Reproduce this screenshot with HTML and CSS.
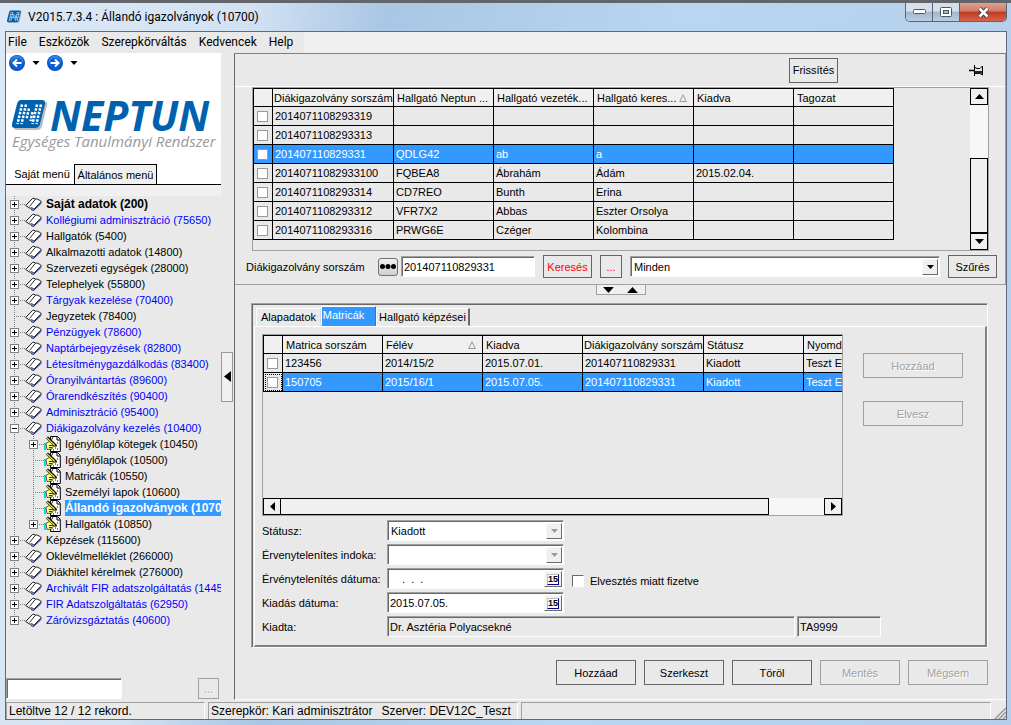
FILE: index.html
```html
<!DOCTYPE html>
<html lang="hu">
<head>
  <meta charset="UTF-8" />
  <title>V2015.7.3.4 : Állandó igazolványok (10700)</title>
  <link rel="stylesheet" href="styles.css">
</head>
<body>
  <!-- shared icons -->
  <svg class="defs" width="0" height="0" aria-hidden="true">
    <symbol id="book" viewBox="0 0 17 14">
      <path d="M6 12.500L8.500 13.500 16.500 6" fill="none" stroke="#0000c0"/>
      <path d="M.7 8.500L7.500 1.500Q9 .6 10.500 2.200 12 1.200 16.300 4.500L9 12.300Q7 9.800 5 11.300Z" fill="#fff" stroke="#000" stroke-width=".9"/>
      <path d="M10.500 2.200L4.500 9.500" fill="none" stroke="#000" stroke-width=".8"/>
    </symbol>
    <symbol id="sheet" viewBox="0 0 17 16">
      <path d="M6.500.5H13.500L16.300 3.300V15.500H6.500Z" fill="#fff" stroke="#000"/>
      <path d="M13 1v3H16M13 7h1M11 12h1M13 13h1M9 14h1M12 10h1" fill="none" stroke="#000"/>
      <path d="M0 7h2v7H0z" fill="#00e0e0"/>
      <path d="M2 7.500L5 5.500 8 6 10 9 8 13 3 13.500Z" fill="#ffff70" stroke="#000" stroke-width=".6"/>
      <path d="M3 1.500L12 10" stroke="#000" stroke-width="3"/>
      <path d="M3 2L11 9.500" stroke="#f0e040" stroke-width="1.200"/>
      <path d="M9 1L7 5M5 9.500h4M5 11.500h3" stroke="#000" stroke-width=".8"/>
    </symbol>
    <symbol id="logo" viewBox="0 0 36 31">
      <path d="M9 2H33Q36 2 35 5L30 26Q29 30 25 30H5Q1 30 2 26Z" fill="#b8bcc0"/>
      <path d="M9 0H30Q34 0 33 4L28 24Q27 28 23 28H3Q-1 28 0 24L5 4Q6 0 9 0Z" fill="#0062ae"/>
      <g stroke="#fff" stroke-width="2.500" stroke-dasharray="2.500 1.300">
        <path d="M10 4.500L5.500 24M14 4.500L9.500 24M25 4.500L20.500 24M29 4.500L24.500 24"/>
        <path d="M17 8.500L14.500 19M20.500 12L18.500 21"/>
      </g>
    </symbol>
    <symbol id="up" viewBox="0 0 9 5"><path d="M4.500 0L9 5H0Z"/></symbol>
    <symbol id="down" viewBox="0 0 9 5"><path d="M0 0H9L4.500 5Z"/></symbol>
    <symbol id="left" viewBox="0 0 5 9"><path d="M5 0V9L0 4.500Z"/></symbol>
    <symbol id="right" viewBox="0 0 5 9"><path d="M0 0L5 4.500 0 9Z"/></symbol>
    <symbol id="sort" viewBox="0 0 8 8"><path d="M4 .8L7.300 7.500H.7Z" fill="none" stroke="#999"/></symbol>
  </svg>

  <div class="window">
    <header class="titlebar">
      <svg class="app-icon" width="15" height="14"><use href="#logo"/></svg>
      <h1>V2015.7.3.4 : Állandó igazolványok (10700)</h1>
      <div class="win-buttons">
        <button class="win-btn" aria-label="Kis méret"><svg width="13" height="6"><rect x=".5" y=".5" width="12" height="4" rx="1" fill="#fff" stroke="#4a5568"/></svg></button>
        <button class="win-btn" aria-label="Teljes méret"><svg width="12" height="11"><rect x=".5" y=".5" width="11" height="9" rx="1" fill="#fff" stroke="#4a5568"/><rect x="3.500" y="3.500" width="5" height="3" fill="#a8b8cc" stroke="#4a5568"/></svg></button>
        <button class="win-btn close" aria-label="Bezárás"><svg width="13" height="11" viewBox="0 0 13 11"><path d="M2.500 1.500L10.500 9.500M10.500 1.500L2.500 9.500" stroke="#4a3a48" stroke-width="4.500"/><path d="M2.500 1.500L10.500 9.500M10.500 1.500L2.500 9.500" stroke="#fff" stroke-width="2.500"/></svg></button>
      </div>
    </header>

    <div class="client">
      <nav class="menubar">
        <a href="#">File</a>
        <a href="#">Eszközök</a>
        <a href="#">Szerepkörváltás</a>
        <a href="#">Kedvencek</a>
        <a href="#">Help</a>
      </nav>

      <div class="workspace">
        <aside class="sidebar">
          <div class="brand">
            <div class="history">
              <button class="round" aria-label="Vissza"><svg width="16" height="16"><circle cx="8" cy="8" r="8" fill="#0a4fc0"/><circle cx="8" cy="7" r="6.500" fill="#2f86ee"/><circle cx="8" cy="9" r="6" fill="#0b5cd8"/><path d="M12.500 8H5M8 4.500L4.500 8 8 11.500" fill="none" stroke="#fff" stroke-width="2"/></svg></button>
              <svg class="drop" width="8" height="4" viewBox="0 0 9 5"><use href="#down"/></svg>
              <button class="round" aria-label="Előre"><svg width="16" height="16"><circle cx="8" cy="8" r="8" fill="#0a4fc0"/><circle cx="8" cy="7" r="6.500" fill="#2f86ee"/><circle cx="8" cy="9" r="6" fill="#0b5cd8"/><path d="M3.500 8H11M8 4.500L11.500 8 8 11.500" fill="none" stroke="#fff" stroke-width="2"/></svg></button>
              <svg class="drop" width="8" height="4" viewBox="0 0 9 5"><use href="#down"/></svg>
            </div>
            <div class="logo">
              <svg width="36" height="31"><use href="#logo"/></svg>
              <span class="logo-name">NEPTUN</span>
            </div>
            <p class="slogan">Egységes Tanulmányi Rendszer</p>
            <div class="menu-tabs">
              <button class="menu-tab">Saját menü</button>
              <button class="menu-tab active">Általános menü</button>
            </div>
          </div>

          <ul class="tree">
            <li><div class="node bold"><button class="toggle plus" aria-label="Kinyit"></button><svg class="book"><use href="#book"/></svg><a href="#">Saját adatok (200)</a></div></li>
            <li><div class="node"><button class="toggle plus" aria-label="Kinyit"></button><svg class="book"><use href="#book"/></svg><a class="blue" href="#">Kollégiumi adminisztráció (75650)</a></div></li>
            <li><div class="node"><button class="toggle plus" aria-label="Kinyit"></button><svg class="book"><use href="#book"/></svg><a href="#">Hallgatók (5400)</a></div></li>
            <li><div class="node"><button class="toggle plus" aria-label="Kinyit"></button><svg class="book"><use href="#book"/></svg><a href="#">Alkalmazotti adatok (14800)</a></div></li>
            <li><div class="node"><button class="toggle plus" aria-label="Kinyit"></button><svg class="book"><use href="#book"/></svg><a href="#">Szervezeti egységek (28000)</a></div></li>
            <li><div class="node"><button class="toggle plus" aria-label="Kinyit"></button><svg class="book"><use href="#book"/></svg><a href="#">Telephelyek (55800)</a></div></li>
            <li><div class="node"><button class="toggle plus" aria-label="Kinyit"></button><svg class="book"><use href="#book"/></svg><a class="blue" href="#">Tárgyak kezelése (70400)</a></div></li>
            <li><div class="node"><span class="no-toggle"></span><svg class="book"><use href="#book"/></svg><a href="#">Jegyzetek (78400)</a></div></li>
            <li><div class="node"><button class="toggle plus" aria-label="Kinyit"></button><svg class="book"><use href="#book"/></svg><a class="blue" href="#">Pénzügyek (78600)</a></div></li>
            <li><div class="node"><button class="toggle plus" aria-label="Kinyit"></button><svg class="book"><use href="#book"/></svg><a class="blue" href="#">Naptárbejegyzések (82800)</a></div></li>
            <li><div class="node"><button class="toggle plus" aria-label="Kinyit"></button><svg class="book"><use href="#book"/></svg><a class="blue" href="#">Létesítménygazdálkodás (83400)</a></div></li>
            <li><div class="node"><button class="toggle plus" aria-label="Kinyit"></button><svg class="book"><use href="#book"/></svg><a class="blue" href="#">Óranyilvántartás (89600)</a></div></li>
            <li><div class="node"><button class="toggle plus" aria-label="Kinyit"></button><svg class="book"><use href="#book"/></svg><a class="blue" href="#">Órarendkészítés (90400)</a></div></li>
            <li><div class="node"><button class="toggle plus" aria-label="Kinyit"></button><svg class="book"><use href="#book"/></svg><a class="blue" href="#">Adminisztráció (95400)</a></div></li>
            <li>
              <div class="node"><button class="toggle" aria-label="Becsuk"></button><svg class="book"><use href="#book"/></svg><a class="blue" href="#">Diákigazolvány kezelés (10400)</a></div>
              <ul>
                <li><div class="node"><button class="toggle plus" aria-label="Kinyit"></button><svg class="sheet"><use href="#sheet"/></svg><a href="#">Igénylőlap kötegek (10450)</a></div></li>
                <li><div class="node"><span class="no-toggle"></span><svg class="sheet"><use href="#sheet"/></svg><a href="#">Igénylőlapok (10500)</a></div></li>
                <li><div class="node"><span class="no-toggle"></span><svg class="sheet"><use href="#sheet"/></svg><a href="#">Matricák (10550)</a></div></li>
                <li><div class="node"><span class="no-toggle"></span><svg class="sheet"><use href="#sheet"/></svg><a href="#">Személyi lapok (10600)</a></div></li>
                <li><div class="node bold"><span class="no-toggle"></span><svg class="sheet"><use href="#sheet"/></svg><a class="selected" href="#">Állandó igazolványok (10700)</a></div></li>
                <li><div class="node"><button class="toggle plus" aria-label="Kinyit"></button><svg class="sheet"><use href="#sheet"/></svg><a href="#">Hallgatók (10850)</a></div></li>
              </ul>
            </li>
            <li><div class="node"><button class="toggle plus" aria-label="Kinyit"></button><svg class="book"><use href="#book"/></svg><a href="#">Képzések (115600)</a></div></li>
            <li><div class="node"><button class="toggle plus" aria-label="Kinyit"></button><svg class="book"><use href="#book"/></svg><a href="#">Oklevélmelléklet (266000)</a></div></li>
            <li><div class="node"><button class="toggle plus" aria-label="Kinyit"></button><svg class="book"><use href="#book"/></svg><a href="#">Diákhitel kérelmek (276000)</a></div></li>
            <li><div class="node"><button class="toggle plus" aria-label="Kinyit"></button><svg class="book"><use href="#book"/></svg><a class="blue" href="#">Archivált FIR adatszolgáltatás (144500)</a></div></li>
            <li><div class="node"><button class="toggle plus" aria-label="Kinyit"></button><svg class="book"><use href="#book"/></svg><a class="blue" href="#">FIR Adatszolgáltatás (62950)</a></div></li>
            <li><div class="node"><button class="toggle plus" aria-label="Kinyit"></button><svg class="book"><use href="#book"/></svg><a class="blue" href="#">Záróvizsgáztatás (40600)</a></div></li>
          </ul>

          <div class="tree-search">
            <input class="sunken" type="text" aria-label="Menüpont keresése">
            <button class="btn" disabled>...</button>
          </div>
        </aside>

        <div class="splitter">
          <button aria-label="Menü elrejtése"><svg width="7" height="11" viewBox="0 0 5 9" preserveAspectRatio="none"><use href="#left"/></svg></button>
        </div>

        <main class="content">
          <section class="top">
            <div class="toolbar">
              <button class="btn">Frissítés</button>
              <svg class="pin" width="15" height="12" viewBox="0 0 15 12"><path d="M0 6.500H5" stroke="#000" stroke-width="1.500"/><path d="M5.500 1V12M6 3.500L8 4.500H11L13.500 2V11L11 9.500H6" fill="none" stroke="#000"/><path d="M6 7h7v2.500H6z" fill="#222"/></svg>
            </div>

            <div class="grid-box">
              <div class="grid-area">
                <table class="grid cards">
                  <thead>
                    <tr><th class="check"></th><th class="wide">Diákigazolvány sorszám</th><th>Hallgató Neptun ...</th><th>Hallgató vezeték...</th><th><span class="sorted">Hallgató keres...<svg width="8" height="8"><use href="#sort"/></svg></span></th><th>Kiadva</th><th>Tagozat</th></tr>
                  </thead>
                  <tbody>
                    <tr><td><input type="checkbox" aria-label="2014071108293319"></td><td>2014071108293319</td><td></td><td></td><td></td><td></td><td></td></tr>
                    <tr><td><input type="checkbox" aria-label="2014071108293313"></td><td>2014071108293313</td><td></td><td></td><td></td><td></td><td></td></tr>
                    <tr class="current"><td><input type="checkbox" aria-label="201407110829331"></td><td>201407110829331</td><td>QDLG42</td><td>ab</td><td>a</td><td></td><td></td></tr>
                    <tr><td><input type="checkbox" aria-label="20140711082933100"></td><td>20140711082933100</td><td>FQBEA8</td><td>Ábrahám</td><td>Ádám</td><td>2015.02.04.</td><td></td></tr>
                    <tr><td><input type="checkbox" aria-label="2014071108293314"></td><td>2014071108293314</td><td>CD7REO</td><td>Bunth</td><td>Erina</td><td></td><td></td></tr>
                    <tr><td><input type="checkbox" aria-label="2014071108293312"></td><td>2014071108293312</td><td>VFR7X2</td><td>Abbas</td><td>Eszter Orsolya</td><td></td><td></td></tr>
                    <tr><td><input type="checkbox" aria-label="2014071108293316"></td><td>2014071108293316</td><td>PRWG6E</td><td>Czéger</td><td>Kolombina</td><td></td><td></td></tr>
                  </tbody>
                </table>
              </div>
              <div class="vscroll">
                <button aria-label="Fel"><svg width="9" height="5"><use href="#up"/></svg></button>
                <div class="track"><div class="thumb"></div></div>
                <button aria-label="Le"><svg width="9" height="5"><use href="#down"/></svg></button>
              </div>
            </div>

            <div class="filter">
              <label for="serial">Diákigazolvány sorszám</label>
              <button class="dots" aria-label="Mező választása"><svg width="16" height="5"><circle cx="2.500" cy="2.500" r="2.500"/><circle cx="8" cy="2.500" r="2.500"/><circle cx="13.500" cy="2.500" r="2.500"/></svg></button>
              <input class="sunken" id="serial" type="text" value="201407110829331">
              <button class="btn red">Keresés</button>
              <button class="btn red more">...</button>
              <div class="field combo">
                <select aria-label="Szűrő"><option>Minden</option></select>
                <span class="arrow"><svg width="7" height="4" viewBox="0 0 9 5"><use href="#down"/></svg></span>
              </div>
              <button class="btn">Szűrés</button>
            </div>
          </section>

          <div class="hsplit">
            <button aria-label="Panelek méretezése"><svg width="11" height="6" viewBox="0 0 9 5"><use href="#down"/></svg><svg width="11" height="6" viewBox="0 0 9 5"><use href="#up"/></svg></button>
          </div>

          <section class="detail">
            <div class="tabs">
              <button class="tab">Alapadatok</button>
              <button class="tab active">Matricák</button>
              <button class="tab">Hallgató képzései</button>
            </div>
            <div class="page">
              <div class="sticker-row">
                <div class="grid-box stickers">
                  <div class="grid-area">
                    <table class="grid">
                      <thead>
                        <tr><th class="check"></th><th>Matrica sorszám</th><th><span class="sorted">Félév<svg width="8" height="8"><use href="#sort"/></svg></span></th><th>Kiadva</th><th class="wide">Diákigazolvány sorszám</th><th>Státusz</th><th>Nyomdai sorszám</th></tr>
                      </thead>
                      <tbody>
                        <tr><td><input type="checkbox" aria-label="123456"></td><td>123456</td><td>2014/15/2</td><td>2015.07.01.</td><td>201407110829331</td><td>Kiadott</td><td>Teszt Elek</td></tr>
                        <tr class="current focus"><td><input type="checkbox" aria-label="150705"></td><td>150705</td><td>2015/16/1</td><td>2015.07.05.</td><td>201407110829331</td><td>Kiadott</td><td>Teszt Elek</td></tr>
                      </tbody>
                    </table>
                  </div>
                  <div class="hscroll">
                    <button aria-label="Balra"><svg width="5" height="9"><use href="#left"/></svg></button>
                    <div class="track"><div class="thumb"></div></div>
                    <button aria-label="Jobbra"><svg width="5" height="9"><use href="#right"/></svg></button>
                  </div>
                </div>
                <div class="side-actions">
                  <button class="btn" disabled>Hozzáad</button>
                  <button class="btn" disabled>Elvesz</button>
                </div>
              </div>

              <div class="form">
                <label for="status">Státusz:</label>
                <div class="field combo off">
                  <select id="status"><option>Kiadott</option></select>
                  <span class="arrow"><svg width="7" height="4" viewBox="0 0 9 5"><use href="#down"/></svg></span>
                </div>
                <label for="reason">Érvenytelenítes indoka:</label>
                <div class="field combo off">
                  <select id="reason"><option></option></select>
                  <span class="arrow"><svg width="7" height="4" viewBox="0 0 9 5"><use href="#down"/></svg></span>
                </div>
                <label for="voidDate">Érvénytelenítés dátuma:</label>
                <div class="line">
                  <div class="field date empty"><input id="voidDate" type="text" value=".  .  ."><button aria-label="Naptár"><span>15</span></button></div>
                  <label class="paid"><input type="checkbox">Elvesztés miatt fizetve</label>
                </div>
                <label for="issueDate">Kiadás dátuma:</label>
                <div class="field date"><input id="issueDate" type="text" value="2015.07.05."><button aria-label="Naptár"><span>15</span></button></div>
                <label for="issuer">Kiadta:</label>
                <div class="line issuer">
                  <input class="sunken" id="issuer" type="text" value="Dr. Asztéria Polyacsekné" readonly>
                  <input class="sunken code" type="text" value="TA9999" aria-label="Kiadó kódja" readonly>
                </div>
              </div>
            </div>
          </section>

          <div class="actions">
            <button class="btn">Hozzáad</button>
            <button class="btn">Szerkeszt</button>
            <button class="btn">Töröl</button>
            <button class="btn" disabled>Mentés</button>
            <button class="btn" disabled>Mégsem</button>
          </div>
        </main>
      </div>

      <footer class="statusbar">
        <div class="records">Letöltve 12 / 12 rekord.</div>
        <div class="role"><span>Szerepkör: Kari adminisztrátor</span><span>Szerver: DEV12C_Teszt</span></div>
        <div class="rest"></div>
        <svg width="12" height="12"><path d="M1 12L12 1M5 12L12 5M9 12L12 9" stroke="#999" stroke-width="1.500"/></svg>
      </footer>
    </div>
  </div>
</body>
</html>
```

FILE: styles.css
```css
* {
  box-sizing: border-box;
}
body {
  margin: 0;
  font: 11px/14px "Liberation Sans", Arial, sans-serif;
  color: #000;
}
button, input, select {
  font: inherit;
  color: inherit;
  margin: 0;
  padding: 0;
  border-radius: 0;
}
a {
  color: inherit;
  text-decoration: none;
}
svg {
  display: block;
  flex: none;
}
.defs {
  position: absolute;
}

/* window frame */
.window {
  height: 100vh;
  min-height: 725px;
  display: flex;
  flex-direction: column;
  padding: 0 4px 5px 5px;
  border-top: 3px solid #62666a;
  background: linear-gradient(100deg, #dbe8f6 0, #d3e2f3 22%, #a9c6e4 34%, #b9d5f0 60%, #b5cfea 100%);
}
.titlebar {
  height: 28px;
  display: flex;
  align-items: center;
  gap: 6px;
  padding-left: 2px;
}
.titlebar h1 {
  flex: 1;
  margin: 0;
  font: 12px/16px Roboto, sans-serif;
}
.win-buttons {
  display: flex;
  align-self: flex-start;
  border: 1px solid #5a6675;
  border-top: 0;
  border-radius: 0 0 5px 5px;
  overflow: hidden;
}
.win-btn {
  width: 27px;
  height: 18px;
  display: flex;
  align-items: center;
  justify-content: center;
  border: 0;
  border-right: 1px solid #5a6675;
  background: linear-gradient(#d5e0ec 45%, #a3b6cb 50%, #bccde0);
}
.win-btn.close {
  width: 46px;
  border-right: 0;
  background: linear-gradient(#e0a090 0, #d27a68 45%, #bd3a22 50%, #d4654c);
}
.client {
  flex: 1;
  display: flex;
  flex-direction: column;
  min-height: 0;
  border: 1px solid #5f6b7a;
  background: #e9e9e9;
}
.menubar {
  height: 21px;
  display: flex;
  gap: 12px;
  padding: 2px 2px 0;
  background: linear-gradient(to right, #e9e9e9 298px, #f0f0f0 298px);
  font: 12px/16px Roboto, sans-serif;
}
.workspace {
  flex: 1;
  min-height: 0;
  display: flex;
}

/* left side */
.sidebar {
  width: 215px;
  display: flex;
  flex-direction: column;
}
.brand {
  background: #fff;
}
.history {
  display: flex;
  align-items: center;
  gap: 7px;
  height: 20px;
  padding-left: 3px;
}
.round {
  border: 0;
  background: none;
}
.logo {
  display: flex;
  align-items: center;
  gap: 2px;
  height: 32px;
  margin-top: 26px;
  padding-left: 6px;
}
.logo-name {
  font: italic bold 41px/32px "Open Sans", sans-serif;
  color: #0062ae;
}
.slogan {
  margin: 1px 0 0;
  padding-left: 6px;
  font: italic 15px/18px "Open Sans", sans-serif;
  color: #999;
  white-space: nowrap;
}
.menu-tabs {
  display: flex;
  margin-top: 14px;
  border-bottom: 1px solid #000;
}
.menu-tab {
  height: 20px;
  width: 68px;
  padding-left: 4px;
  border: 0;
  background: none;
  white-space: nowrap;
}
.menu-tab.active {
  width: 83px;
  padding: 0;
  margin-bottom: -1px;
  border: 1px solid #000;
  border-bottom: 0;
  background: #f0f0f0;
}
.tree, .tree ul {
  list-style: none;
  margin: 0;
  padding: 0;
}
.tree {
  flex: 1;
  border-top: 11px solid #f0f0f0;
  overflow: hidden;
}
.tree ul {
  padding-left: 19px;
}
.tree li {
  background: repeating-linear-gradient(#808080 0 1px, transparent 1px 2px) 8px 0 / 1px 100% no-repeat;
}
.tree li:last-child {
  background-size: 1px 8px;
}
.node {
  display: flex;
  align-items: center;
  height: 16px;
  padding-left: 4px;
  background: repeating-linear-gradient(to right, #808080 0 1px, transparent 1px 2px) 8px 8px / 12px 1px no-repeat;
}
.node a {
  padding: 1px 0;
  white-space: nowrap;
}
.node .blue {
  color: #0000ff;
}
.node .selected {
  background: #3399ff;
  color: #fff;
}
.node.bold {
  font-size: 12px;
  font-weight: bold;
}
.toggle {
  flex: none;
  width: 9px;
  height: 9px;
  border: 1px solid #808080;
  background: linear-gradient(#000, #000) center / 5px 1px no-repeat, #fff;
}
.toggle.plus {
  background: linear-gradient(#000, #000) center / 5px 1px no-repeat, linear-gradient(#000, #000) center / 1px 5px no-repeat, #fff;
}
.no-toggle {
  flex: none;
  width: 9px;
}
.book {
  width: 17px;
  height: 14px;
  margin: 0 4px 0 6px;
}
.sheet {
  width: 17px;
  height: 16px;
  margin: 0 4px 0 6px;
}
.tree-search {
  display: flex;
  justify-content: space-between;
  padding-right: 2px;
  height: 22px;
}
.tree-search input {
  width: 116px;
  height: 21px;
}
.tree-search .btn {
  width: 21px;
  height: 21px;
}
.splitter {
  width: 13px;
  display: flex;
  align-items: center;
}
.splitter button {
  width: 12px;
  height: 50px;
  display: flex;
  align-items: center;
  justify-content: center;
  border: 1px solid #999;
  background: #f0f0f0;
}

/* buttons and fields */
.btn {
  height: 23px;
  border: 1px solid #646464;
  background: #e9e9e9;
  white-space: nowrap;
}
.btn:disabled {
  border-color: #a0a0a0;
  color: #a0a0a0;
  text-shadow: 1px 1px #fff;
}
.btn.red {
  color: #ff0000;
}
.sunken, .field {
  border: 1px solid;
  border-color: #a0a0a0 #fff #fff #a0a0a0;
  background: #fff;
  box-shadow: inset 1px 1px #696969;
  outline: 0;
}
.sunken {
  padding: 0 2px;
}
.sunken:read-only {
  background: #e9e9e9;
}
.field {
  display: flex;
  height: 21px;
  padding: 2px 1px 1px 2px;
}
.field select, .field input {
  flex: 1;
  min-width: 0;
  border: 0;
  background: none;
  appearance: none;
  padding: 0 1px;
  outline: 0;
}
.arrow {
  width: 16px;
  display: flex;
  align-items: center;
  justify-content: center;
  border: 1px solid;
  border-color: #f8f8f8 #696969 #696969 #f8f8f8;
  background: #f0f0f0;
}
.off .arrow {
  fill: #999;
}
input[type="checkbox"] {
  appearance: none;
  display: block;
  width: 11px;
  height: 11px;
  border: 1px solid #999;
  background: #fff;
}

/* right side */
.content {
  flex: 1;
  min-width: 0;
  display: flex;
  flex-direction: column;
  border-top: 1px solid #808080;
  border-left: 1px solid #696969;
  border-bottom: 1px solid #fff;
}
.top {
  border-right: 1px solid #a0a0a0;
  border-bottom: 1px solid #a0a0a0;
}
.toolbar {
  display: flex;
  align-items: center;
  justify-content: flex-end;
  gap: 131px;
  height: 33px;
  padding-right: 21px;
  border-bottom: 1px solid #fff;
}
.toolbar .btn {
  width: 49px;
  height: 25px;
}
.grid-box {
  display: flex;
  margin: 0 16px 0 17px;
  border: 1px solid #a0a0a0;
}
.grid-area {
  flex: 1;
  min-width: 0;
  overflow: hidden;
}
.grid {
  width: 641px;
  table-layout: fixed;
  border-collapse: collapse;
}
.grid th, .grid td {
  height: 19px;
  padding: 0 0 0 2px;
  border: 1px solid #000;
  text-align: left;
  white-space: nowrap;
  overflow: hidden;
}
.grid th {
  height: 18px;
  padding-left: 3px;
  background: #f0f0f0;
  font-weight: normal;
}
.grid .check {
  width: 19px;
}
.grid .wide {
  width: 121px;
  padding-left: 1px;
}
.grid td input {
  margin-left: 1px;
}
.sorted {
  display: flex;
  align-items: center;
  justify-content: space-between;
  padding-right: 6px;
}
.current {
  background: #3399ff;
  color: #fff;
}
.focus td:first-child {
  background: #e9e9e9;
  outline: 1px dotted #000;
  outline-offset: -2px;
}
.vscroll, .hscroll {
  display: flex;
}
.vscroll {
  flex-direction: column;
  width: 18px;
  height: 162px;
}
.vscroll button, .hscroll button {
  width: 18px;
  height: 17px;
  display: flex;
  align-items: center;
  justify-content: center;
  border: 1px solid #000;
  background: #f0f0f0;
}
.track {
  flex: 1;
  display: flex;
  background: #f7f7f7;
}
.vscroll .track {
  flex-direction: column;
  justify-content: flex-end;
}
.thumb {
  border: 1px solid #000;
  background: #f0f0f0;
}
.vscroll .thumb {
  height: 75px;
}
.filter {
  display: flex;
  align-items: center;
  gap: 8px;
  height: 33px;
  padding: 0 8px 2px 11px;
}
.filter label {
  width: 124px;
}
.dots {
  width: 20px;
  height: 18px;
  display: flex;
  align-items: center;
  justify-content: center;
  border: 1px solid #707070;
  border-radius: 3px;
  background: linear-gradient(#f2f2f2, #d0d0d0);
}
.filter .sunken {
  width: 134px;
  height: 21px;
  margin-left: -5px;
}
.filter .btn {
  width: 49px;
}
.filter .more {
  width: 22px;
}
.filter .combo {
  flex: 1;
}
.hsplit {
  display: flex;
  justify-content: center;
  height: 18px;
}
.hsplit button {
  width: 50px;
  height: 10px;
  display: flex;
  align-items: center;
  justify-content: center;
  gap: 13px;
  border: 1px solid #a0a0a0;
  border-top: 0;
  background: #f0f0f0;
}
.detail {
  flex: 1;
  display: flex;
  flex-direction: column;
  margin: 0 18px 0 16px;
  border: 1px solid;
  border-color: #a0a0a0 #fff #fff #a0a0a0;
  box-shadow: inset 1px 1px #696969;
  padding: 2px 0 0 2px;
}
.tabs {
  display: flex;
  align-items: flex-end;
  height: 20px;
  padding-left: 2px;
}
.tab {
  height: 18px;
  width: 65px;
  border: 1px solid;
  border-color: #fff #d8d8d8 transparent #fff;
  background: none;
  white-space: nowrap;
}
.tab.active {
  height: 20px;
  width: 55px;
  padding: 0 10px 3px 0;
  border-color: #fff #696969 #3399ff #fff;
  background: #3399ff;
  color: #fff;
}
.tab:last-child {
  width: 94px;
  border-right: 2px solid #696969;
}
.page {
  flex: 1;
  border-top: 1px solid #fff;
  border-right: 2px solid #808080;
  border-bottom: 2px solid #808080;
  border-left: 1px solid #fff;
  padding: 7px 22px 0 7px;
}
.sticker-row {
  display: flex;
  gap: 20px;
}
.stickers {
  flex: 1;
  min-width: 0;
  height: 182px;
  flex-direction: column;
  margin: 0;
}
.hscroll .thumb {
  width: 90%;
  margin-left: -1px;
}
.side-actions {
  display: flex;
  flex-direction: column;
  gap: 23px;
  padding-top: 19px;
}
.side-actions .btn {
  width: 100px;
  height: 25px;
}
.form {
  display: grid;
  grid-template-columns: 125px 1fr;
  grid-auto-rows: 21px;
  row-gap: 3px;
  align-items: center;
  padding-top: 4px;
}
.form .field {
  width: 177px;
}
.line {
  display: flex;
  align-items: center;
}
.paid {
  display: flex;
  align-items: center;
  gap: 6px;
  margin: 4px 0 0 8px;
}
.form .paid input {
  width: 12px;
  height: 12px;
  border-color: #696969 #fff #fff #696969;
}
.date input {
  padding: 0;
}
.date.empty input {
  padding-left: 12px;
  white-space: pre;
}
.date button {
  width: 18px;
  display: flex;
  align-items: center;
  justify-content: center;
  border: 1px solid;
  border-color: #f8f8f8 #696969 #696969 #f8f8f8;
  background: #f0f0f0;
}
.date span {
  border: 1px solid #c0c0c0;
  border-right-color: #000080;
  border-bottom-color: #000080;
  background: #fff;
  font: bold 9px/9px "Liberation Sans", Arial, sans-serif;
}
.issuer {
  gap: 2px;
}
.issuer .sunken {
  width: 408px;
  height: 21px;
}
.issuer .code {
  width: 84px;
}
.actions {
  display: flex;
  justify-content: flex-end;
  gap: 8px;
  padding: 12px 18px 14px;
}
.actions .btn {
  width: 80px;
  height: 25px;
}

.statusbar {
  height: 19px;
  display: flex;
  align-items: flex-end;
  gap: 3px;
  font-size: 12px;
  line-height: 17px;
}
.statusbar div {
  height: 17px;
  padding-left: 2px;
  border-top: 1px solid #a0a0a0;
  border-left: 1px solid #a0a0a0;
  border-right: 1px solid #fff;
  white-space: nowrap;
}
.records {
  width: 199px;
}
.role {
  width: 310px;
  display: flex;
  gap: 9px;
}
.rest {
  flex: 1;
}
```
